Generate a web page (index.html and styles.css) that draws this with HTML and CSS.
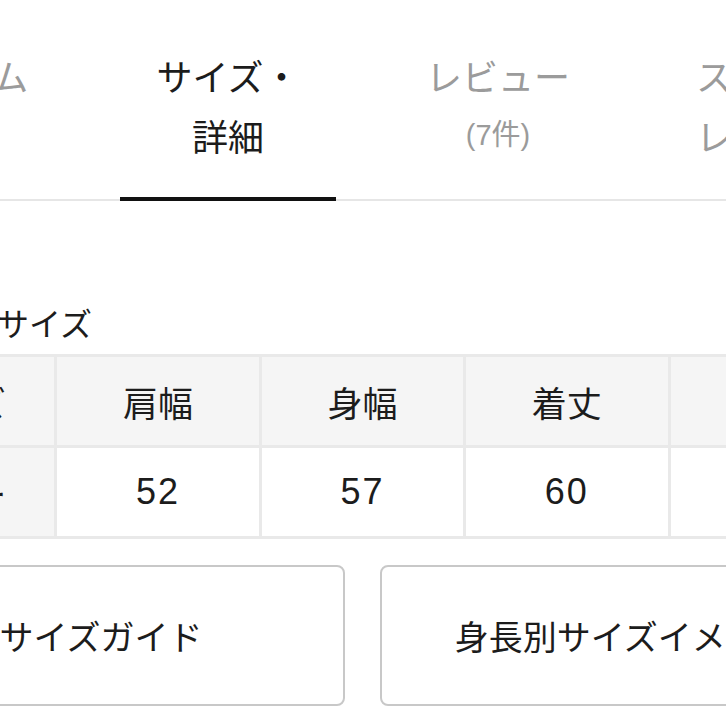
FILE: index.html
```html
<!DOCTYPE html>
<html lang="ja">
<head>
<meta charset="utf-8">
<link rel="stylesheet" href="styles.css">
</head>
<body>
<div class="page">
  <nav class="tabs">
    <div class="tab"><div class="tab-label"><span class="line">アイテム</span><span class="line">&nbsp;</span></div></div>
    <div class="tab active"><div class="tab-label"><span class="line">サイズ・</span><span class="line">詳細</span></div></div>
    <div class="tab"><div class="tab-label"><span class="line">レビュー</span><span class="line count">(7件)</span></div></div>
    <div class="tab"><div class="tab-label"><span class="line">スタッフ</span><span class="line">レビュー</span></div></div>
  </nav>

  <h2 class="heading">サイズ</h2>

  <table class="size-table">
    <tr class="head">
      <th>サイズ</th>
      <th>肩幅</th>
      <th>身幅</th>
      <th>着丈</th>
      <th>重量</th>
    </tr>
    <tr>
      <th>フリー</th>
      <td>52</td>
      <td>57</td>
      <td>60</td>
      <td>310</td>
    </tr>
  </table>

  <div class="buttons">
    <a class="btn">サイズガイド</a>
    <a class="btn">身長別サイズイメージ</a>
  </div>
</div>
</body>
</html>
```

FILE: styles.css
```css
html, body {
  margin: 0;
  padding: 0;
  background: #fff;
}
body {
  overflow: hidden;
  width: 726px;
  height: 726px;
  font-family: "Noto Sans CJK JP", sans-serif;
  color: #1c1c1c;
}
.page {
  width: 1200px;
}
.tabs {
  display: flex;
  margin-left: -177px;
  border-bottom: 2px solid #e6e6e6;
}
.tab {
  flex: 0 0 270px;
  box-sizing: border-box;
  padding: 45px 27px 0;
  text-align: center;
  color: #9b9b9b;
  font-size: 36px;
}
.tab-label {
  display: flex;
  flex-direction: column;
  padding-bottom: 32px;
  margin-bottom: -2px;
  border-bottom: 4px solid transparent;
  white-space: nowrap;
}
.line {
  display: block;
  height: 60px;
  line-height: 60px;
  overflow: hidden;
}
.tab.active {
  color: #1c1c1c;
}
.tab.active .tab-label {
  border-bottom-color: #111;
}
.count {
  font-family: "Liberation Sans", "Noto Sans CJK JP", sans-serif;
  font-size: 29px;
}
.heading {
  margin: 101px 0 12px -3px;
  font-size: 32px;
  font-weight: 400;
  line-height: 40px;
}
.size-table {
  margin-left: -150px;
  border-collapse: collapse;
  table-layout: fixed;
  width: 1025px;
}
.size-table th,
.size-table td {
  height: 88px;
  padding: 0;
  border: 3px solid #e9e9e9;
  text-align: center;
  vertical-align: middle;
  font-size: 35px;
  font-weight: 400;
  color: #1c1c1c;
}
.size-table th {
  background: #f5f5f5;
}
.size-table td {
  background: #fff;
  font-family: "Liberation Sans", "Noto Sans CJK JP", sans-serif;
  font-size: 36px;
  letter-spacing: 2px;
}
.buttons {
  display: flex;
  gap: 35px;
  margin: 26px 0 0 -143px;
}
.btn {
  flex: 0 0 488px;
  box-sizing: border-box;
  height: 141px;
  display: flex;
  align-items: center;
  justify-content: center;
  border: 2px solid #c8c8c8;
  border-radius: 8px;
  font-size: 34px;
  color: #1c1c1c;
  white-space: nowrap;
}
```
